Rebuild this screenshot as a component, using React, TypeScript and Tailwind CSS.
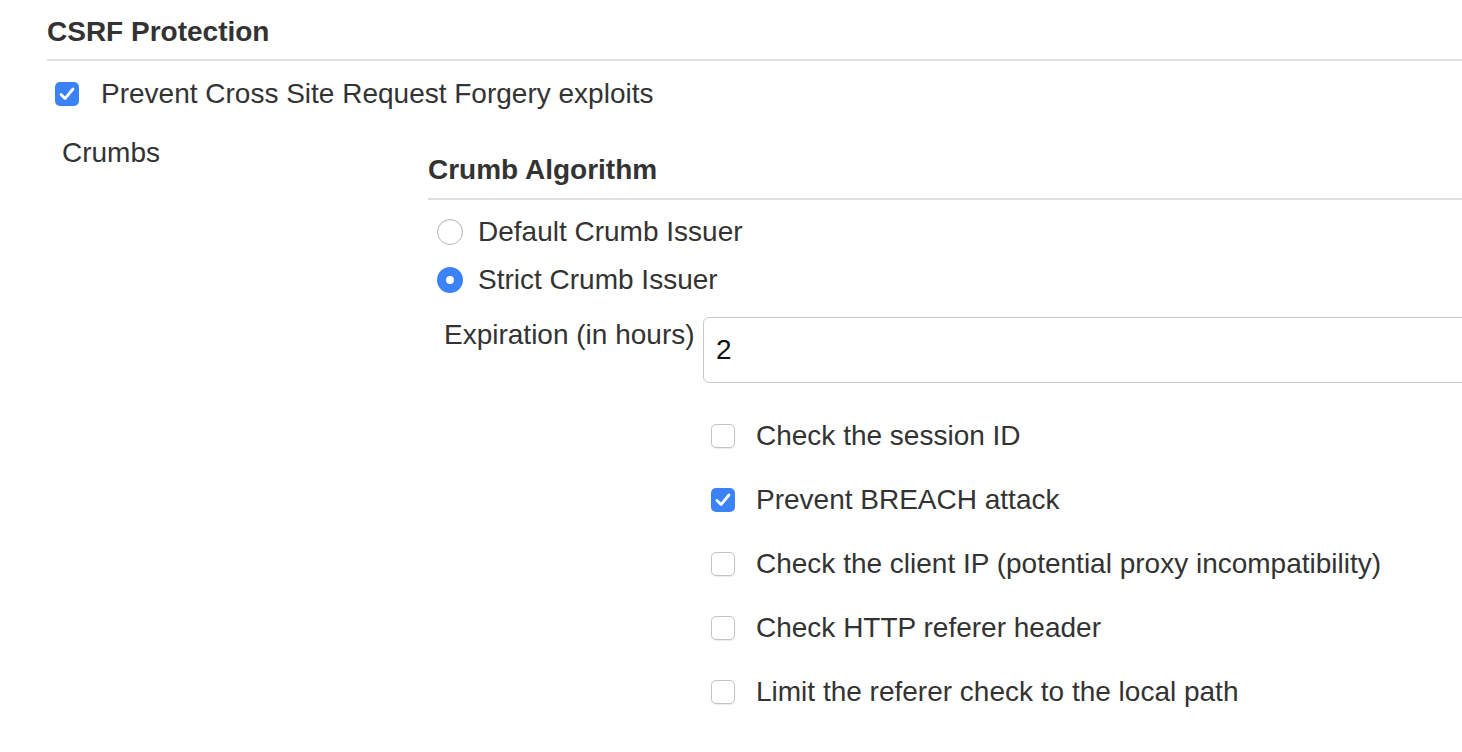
import React from "react";

function Check({ checked }: { checked: boolean }) {
  if (checked) {
    return (
      <span className="flex h-[24px] w-[24px] shrink-0 items-center justify-center rounded-[5px] bg-[#3b82f7]">
        <svg width="24" height="24" viewBox="0 0 24 24" fill="none">
          <path d="M6 12.6 L10 16.6 L18 7" stroke="white" strokeWidth="2.8" strokeLinecap="round" strokeLinejoin="round" />
        </svg>
      </span>
    );
  }
  return (
    <span className="h-[24px] w-[24px] shrink-0 rounded-[5px] border border-[#c4c4c4] bg-white shadow-[0_1px_1px_rgba(0,0,0,0.08)]" />
  );
}

function Radio({ checked }: { checked: boolean }) {
  if (checked) {
    return (
      <span className="flex h-[26px] w-[26px] shrink-0 items-center justify-center rounded-full bg-[#3b82f7]">
        <span className="h-[8px] w-[8px] rounded-full bg-white" />
      </span>
    );
  }
  return <span className="h-[26px] w-[26px] shrink-0 rounded-full border border-[#b5b5b5] bg-white shadow-[inset_0_1px_1px_rgba(0,0,0,0.05)]" />;
}

const opts: [string, boolean][] = [
  ["Check the session ID", false],
  ["Prevent BREACH attack", true],
  ["Check the client IP (potential proxy incompatibility)", false],
  ["Check HTTP referer header", false],
  ["Limit the referer check to the local path", false],
];

export default function App() {
  return (
    <div className="h-[752px] w-[1462px] overflow-hidden bg-white pl-[47px] pt-[12px] font-['Liberation_Sans',Arial,sans-serif] text-[28px] text-[#333]">
      <div className="border-b-2 border-[#e0e0e0] pb-[7px] font-bold leading-[40px]">CSRF Protection</div>
      <label className="mt-[13px] flex h-[40px] items-center pl-[8px]">
        <Check checked />
        <span className="ml-[22px] leading-[40px]">Prevent Cross Site Request Forgery exploits</span>
      </label>
      <div className="mt-[19px] flex">
        <div className="w-[381px] shrink-0 pl-[15px] leading-[40px]">Crumbs</div>
        <div className="flex-1 pt-[17px]">
          <div className="border-b-2 border-[#e0e0e0] pb-[8px] font-bold leading-[40px]">Crumb Algorithm</div>
          <div className="mt-[8px] flex flex-col pl-[9px]">
            <label className="flex h-[48px] items-center">
              <Radio checked={false} />
              <span className="ml-[15px]">Default Crumb Issuer</span>
            </label>
            <label className="flex h-[48px] items-center">
              <Radio checked />
              <span className="ml-[15px]">Strict Crumb Issuer</span>
            </label>
          </div>
          <div className="mt-[13px] flex items-start">
            <div className="w-[275px] shrink-0 pl-[16px] leading-[36px]">Expiration (in hours)</div>
            <div className="mr-[-20px] flex h-[66px] flex-1 items-center rounded-[6px] border border-[#c8c8c8] pl-[12px] text-[#111]">
              2
            </div>
          </div>
          <div className="mt-[21px] flex flex-col pl-[283px]">
            {opts.map(([t, c]) => (
              <label key={t} className="flex h-[64px] items-center">
                <Check checked={c} />
                <span className="ml-[21px]">{t}</span>
              </label>
            ))}
          </div>
        </div>
      </div>
    </div>
  );
}
